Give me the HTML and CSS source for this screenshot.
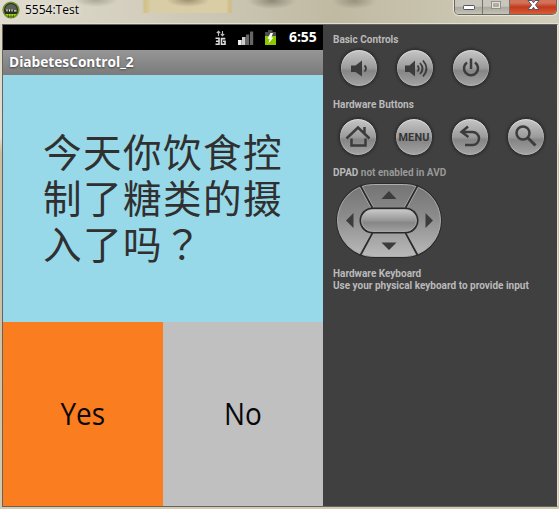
FILE: index.html
```html
<!DOCTYPE html>
<html lang="zh-CN">
<head>
<meta charset="utf-8">
<title>5554:Test</title>
<link rel="stylesheet" href="styles.css">
</head>
<body>
<div class="window">
  <header class="titlebar">
    <svg class="app-icon" width="18" height="18" viewBox="0 0 18 18">
      <circle cx="9" cy="9" r="7.8" fill="#26301a" stroke="#769331" stroke-width="1.6"/>
      <path d="M3 9a6 6 0 0 1 12 0z" fill="#59605a"/>
      <path d="M5 8.500v2M7.500 8.500v2M10 8.500v2M12 9.800h2.500" stroke="#f2f4ee" stroke-width="1.200"/>
      <path d="M3 13h12a8 8 0 0 1-12 0z" fill="#a6d51e"/>
      <path d="M6.500 13.500v3M9 13.500v3M11.500 13.500v3" stroke="#40581a" stroke-width=".8"/>
    </svg>
    <span class="caption">5554:Test</span>
    <div class="caption-buttons">
      <span class="cap"><svg width="27" height="14" viewBox="0 0 27 14"><rect x="8.500" y="5.500" width="11" height="4" rx=".7" fill="#fff" stroke="#565465"/></svg></span>
      <span class="cap"><svg width="26" height="14" viewBox="0 0 26 14"><rect x="8.500" y="1.500" width="9" height="7" fill="none" stroke="#929188"/><rect x="9.500" y="2.500" width="7" height="5" fill="none" stroke="#e2e0d8"/><rect x="11" y="4" width="4" height="2" fill="none" stroke="#929188" stroke-width=".8"/></svg></span>
      <span class="cap close"><svg width="46" height="14" viewBox="0 0 46 14"><path d="M18 .5h4l1.500 2.300L25 .5h4L25.500 5l3.500 4.500h-4L23.500 7.200l-1.500 2.300h-4L21.500 5z" fill="#fff" stroke="#5d5260"/></svg></span>
    </div>
  </header>
  <main class="client">
    <section class="phone">
      <div class="status">
        <svg width="70" height="25" viewBox="0 0 70 25">
          <g fill="none" stroke="#bbb" stroke-width="1.100">
            <path d="M6.500 11V6.500M4.800 8l1.700-1.700L8.200 8M10.500 6v4.500M8.800 9l1.700 1.700L12.200 9"/>
            <path d="M3.500 13.300H7V19.300H3.500M4 16.300h3M13.300 13.600H9.500v5.700h3.500v-3h-2" stroke="#ddd" stroke-width="1.600"/>
          </g>
          <path d="M26 15h3.700v5H26z" fill="#eee"/><path d="M30 12h3.500v8H30z" fill="#ccc"/>
          <path d="M34 9.500h3.200v10.500H34zM38 6.500h3.200v13.500H38z" fill="#666"/>
          <path d="M53 7h3V5h4.500v2H64v5H53z" fill="#4c4c4c"/>
          <path d="M53 11h11v9H53z" fill="#8cc800"/>
          <path d="M58.500 8l-3 5.800h2.200L56.500 18.500l5-6h-2.200L61 8z" fill="#fff"/>
        </svg>
        <span class="clock">6:55</span>
      </div>
      <div class="app-title">DiabetesControl_2</div>
      <p class="question">今天你饮食控<br>制了糖类的摄<br>入了吗<span lang="zh-TW">？</span></p>
      <div class="answers">
        <div class="answer yes"><span>Yes</span></div>
        <div class="answer no"><span>No</span></div>
      </div>
    </section>
    <aside class="controls">
      <h2>Basic Controls</h2>
      <div class="row basic">
        <span class="key"><svg width="36" height="36" viewBox="0 0 36 36"><path d="M10 15.500h4.500L21 10.500v16L14.500 22H10z" fill="#3c3c3c"/><path d="M23.500 15.500q3 3 0 6" class="line thin"/></svg></span>
        <span class="key"><svg width="36" height="36" viewBox="0 0 36 36"><path d="M8 15.500h4.500L18 10.500v16L12.500 22H8z" fill="#3c3c3c"/><path d="M20.500 15.500q2.500 3 0 6M23 13q5 5.500 0 11M26 10.500q7 8 0 16" class="line thin"/></svg></span>
        <span class="key"><svg width="36" height="36" viewBox="0 0 36 36"><path d="M14 12.500a7 7 0 1 0 8 0M18 8.500v10.500" class="line"/></svg></span>
      </div>
      <h2>Hardware Buttons</h2>
      <div class="row hardware">
        <span class="key"><svg width="36" height="36" viewBox="0 0 36 36"><path d="M6.500 19.500L18 8.500l11.500 11M24.500 14.500V8M11.500 19.500v7h14v-7" class="line"/></svg></span>
        <span class="key menu">MENU</span>
        <span class="key"><svg width="36" height="36" viewBox="0 0 36 36"><path d="M16 7.500L9.500 13l7 5M10 13h10.500a6.500 6.500 0 0 1 0 13H13" class="line"/></svg></span>
        <span class="key"><svg width="36" height="36" viewBox="0 0 36 36"><circle cx="15" cy="14" r="6.500" class="line"/><path d="M19.500 18.500l8 8" class="line thick"/></svg></span>
      </div>
      <h2 class="dpad-label">DPAD <span>not enabled in AVD</span></h2>
      <svg class="dpad" width="108" height="78" viewBox="0 0 108 78">
        <defs>
          <linearGradient id="ring" x1="0" y1="0" x2="0" y2="1"><stop offset="0" stop-color="#747474"/><stop offset=".45" stop-color="#8c8c8c"/><stop offset="1" stop-color="#bababa"/></linearGradient>
          <linearGradient id="pill" x1="0" y1="0" x2="0" y2="1"><stop offset="0" stop-color="#c9c9c9"/><stop offset=".5" stop-color="#969696"/><stop offset=".6" stop-color="#868686"/><stop offset="1" stop-color="#a0a0a0"/></linearGradient>
        </defs>
        <rect x="1" y="1" width="106" height="75" rx="37.500" fill="#2a2a2a"/>
        <rect x="2.500" y="2.500" width="103" height="72" rx="36" fill="url(#ring)" stroke="#adadad"/>
        <path d="M26 5L37.500 26M82 5L70.500 26M26 72L37.500 51M82 72L70.500 51" stroke="#b0b0b0" stroke-width="3.400"/>
        <path d="M25 3L37.500 26M83 3L70.500 26M25 74L37.500 51M83 74L70.500 51" stroke="#2d2d2d" stroke-width="1.800"/>
        <rect x="24.500" y="25.500" width="59" height="26" rx="13" fill="#292929"/>
        <rect x="26.500" y="27.500" width="55" height="22" rx="11" fill="url(#pill)" stroke="#b8b8b8" stroke-width=".8"/>
        <path d="M46.500 17L54 9l7.500 8zM46.500 60.500L54 68l7.500-7.500zM18.500 31v15L11 38.500zM90.500 31v15l7.500-7.500z" fill="#3c3c3c"/>
      </svg>
      <h2 class="keyboard">Hardware Keyboard<br>Use your physical keyboard to provide input</h2>
    </aside>
  </main>
</div>
</body>
</html>
```
FILE: styles.css
```css
* { box-sizing: border-box; }
body { margin: 0; }

.window {
  width: 559px;
  height: 509px;
  padding: 0 2px 2px;
  display: flex;
  flex-direction: column;
  overflow: hidden;
  background: linear-gradient(#dcd6bd, #e4dfd0 27%, #cbbd9d 30%, #d5c9ae);
}

.titlebar {
  height: 24px;
  flex: none;
  display: flex;
  align-items: flex-start;
  margin: 0 -2px;
  border-bottom: 1px solid #e2e0d0;
  background:
    radial-gradient(ellipse 22px 7px at 96px 0, #aaa796, transparent),
    radial-gradient(ellipse 22px 7px at 188px 0, #9d9373, transparent),
    radial-gradient(ellipse 24px 8px at 272px 1px, #8f8a78, transparent),
    radial-gradient(ellipse 22px 8px at 354px 1px, #98927e, transparent),
    linear-gradient(90deg, transparent 142px, #d2b96cb0 145px, #d8cda5 151px, #d8cda5 226px, #d2b96cb0 230px, transparent 233px) 0 0 / 100% 13px no-repeat,
    linear-gradient(90deg, #e0dccf, #cfcab8 32%, #c0baa3 60%, #d3cebb);
}
.app-icon { margin: 1px 0 0 2px; flex: none; }
.caption {
  margin-left: 5px;
  font: 12px/19px "Open Sans", sans-serif;
  color: #000;
  letter-spacing: 0;
  text-shadow: 0 0 5px #fff;
}
.caption-buttons {
  display: flex;
  margin: 0 2px 0 auto;
  height: 15px;
  border: 1px solid #6b6862;
  border-top: 0;
  border-radius: 0 0 5px 5px;
  overflow: hidden;
  box-shadow: 0 0 1px 1px #ece8da;
}
.cap { height: 14px; background: linear-gradient(#c9c6bb 45%, #aaa89e 50%, #c5c2b6); border-right: 1px solid #77736b; }
.cap svg { display: block; }
.cap.close { border: 0; background: linear-gradient(#d2725a 20%, #c23a1d 50%, #d95b36); }

.client {
  flex: 1;
  display: flex;
  border: 1px solid #636363;
  margin-right: -1px;
  border-right-color: #e5e0d2;
  background: #404040;
}

.phone { width: 320px; display: flex; flex-direction: column; }
.status {
  height: 25px;
  flex: none;
  display: flex;
  justify-content: flex-end;
  background: #000;
}
.status svg { margin-right: 7px; }
.clock {
  width: 34px;
  font: bold 14px/24px "Open Sans", sans-serif;
  color: #fff;
  letter-spacing: -0.1px;
}
.app-title {
  height: 25px;
  flex: none;
  padding-left: 6px;
  background: linear-gradient(#969696, #7b7b7b);
  font: bold 13.7px/23px "Open Sans", sans-serif;
  color: #fff;
  text-shadow: 0 1px 2px #444;
}
.question {
  height: 247px;
  flex: none;
  margin: 0;
  padding: 52px 0 0 40px;
  background: #98d9e9;
  color: #303030;
  font: 38.6px/46.2px "Noto Sans CJK SC", sans-serif;
  letter-spacing: 1.4px;
  white-space: nowrap;
}
.question span { font-family: "Noto Sans CJK TC", sans-serif; }
.answers { flex: 1; display: grid; grid-template-columns: 160px 160px; }
.answer {
  display: flex;
  align-items: center;
  justify-content: center;
  padding-bottom: 3px;
  font: 31px/40px "Open Sans", sans-serif;
  color: #080808;
}
.answer span { transform: scaleX(.9); }
.yes { background: #fa7d20; }
.no { background: #c0c0c0; }

.controls { flex: 1; padding: 9px 0 0 10px; background: #404040; }
.controls h2 {
  margin: 0;
  font: bold 10px/12px Roboto, sans-serif;
  color: #bababa;
  white-space: nowrap;
}
.row { display: flex; gap: 18px; }
.basic { margin: 3px 0 12px 7px; }
.hardware { margin: 7px 0 11px 6px; }
.key {
  width: 38px;
  height: 38px;
  flex: none;
  border-radius: 50%;
  border: 1px solid #2e2e2e;
  background: linear-gradient(#c6c6c6, #9b9b9b 50%, #858585 58%, #a3a3a3);
  box-shadow: 0 0 2px 1px #303030, inset 0 1px 1px #e0e0e0, inset 0 -1px 1px #bbb;
}
.key svg { display: block; }
.line { fill: none; stroke: #3c3c3c; stroke-width: 2.5; }
.thin { stroke-width: 1.8; }
.thick { stroke-width: 3; }
.menu {
  font: bold 10.8px/38px Roboto, sans-serif;
  text-align: center;
  color: #363636;
  letter-spacing: .2px;
}
.dpad-label span { color: #999; }
.dpad { display: block; margin: 3px 0 8px 2px; }
.controls .keyboard { line-height: 11.5px; }
```
